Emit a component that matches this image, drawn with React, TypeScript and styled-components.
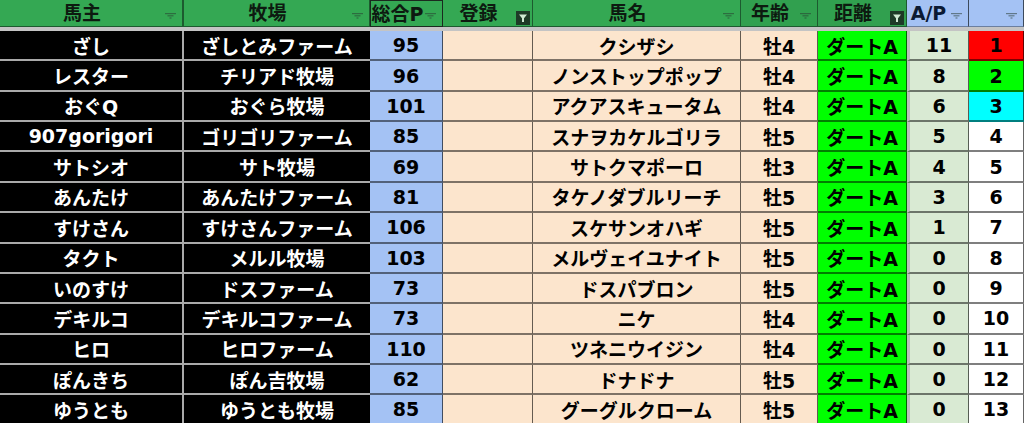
import styled, { createGlobalStyle } from "styled-components";

const GlobalStyle = createGlobalStyle`
  html, body {
    margin: 0;
    padding: 0;
    background: #ffffff;
  }
  body {
    font-family: "DejaVu Sans", "Noto Sans CJK JP", sans-serif;
    overflow: hidden;
  }
`;

const COLUMNS = "184px 186px 73px 90px 208px 77px 89px 62px 55px";

type Tone = "black" | "blue" | "peach" | "dist" | "ap" | "rank";

const rows = [
  ["ざし", "ざしとみファーム", "95", "クシザシ", "牡4", "11", "1"],
  ["レスター", "チリアド牧場", "96", "ノンストップポップ", "牡4", "8", "2"],
  ["おぐQ", "おぐら牧場", "101", "アクアスキュータム", "牡4", "6", "3"],
  ["907gorigori", "ゴリゴリファーム", "85", "スナヲカケルゴリラ", "牡5", "5", "4"],
  ["サトシオ", "サト牧場", "69", "サトクマポーロ", "牡3", "4", "5"],
  ["あんたけ", "あんたけファーム", "81", "タケノダブルリーチ", "牡5", "3", "6"],
  ["すけさん", "すけさんファーム", "106", "スケサンオハギ", "牡5", "1", "7"],
  ["タクト", "メルル牧場", "103", "メルヴェイユナイト", "牡5", "0", "8"],
  ["いのすけ", "ドスファーム", "73", "ドスパブロン", "牡5", "0", "9"],
  ["デキルコ", "デキルコファーム", "73", "ニケ", "牡4", "0", "10"],
  ["ヒロ", "ヒロファーム", "110", "ツネニウイジン", "牡4", "0", "11"],
  ["ぽんきち", "ぽん吉牧場", "62", "ドナドナ", "牡5", "0", "12"],
  ["ゆうとも", "ゆうとも牧場", "85", "グーグルクローム", "牡5", "0", "13"],
];

const rankColors: Record<string, string> = {
  "1": "#ff0000",
  "2": "#00ff00",
  "3": "#00ffff",
};

const toneBg: Record<Tone, string> = {
  black: "#000000",
  blue: "#a4c2f4",
  peach: "#fce5cd",
  dist: "#00ff00",
  ap: "#d9ead3",
  rank: "#ffffff",
};

function FilterMark() {
  return (
    <FilterLines width="11" height="6" viewBox="0 0 11 6">
      <rect x="0" y="0" width="11" height="1.2" />
      <rect x="2.5" y="2.2" width="6" height="1.2" />
      <rect x="4.5" y="4.4" width="2" height="1.2" />
    </FilterLines>
  );
}

function ActiveFilter() {
  return (
    <ActiveBox>
      <svg width="14" height="14" viewBox="0 0 14 14">
        <polygon points="3,3.5 11,3.5 8,7.2 8,11 6,11 6,7.2" fill="#cfe8d2" />
      </svg>
    </ActiveBox>
  );
}

function App() {
  return (
    <>
      <GlobalStyle />
      <Sheet>
        <HeaderRow>
          <HeadCell $bg="#34a853">
            <HeadText>馬主</HeadText>
            <FilterMark />
          </HeadCell>
          <HeadCell $bg="#34a853">
            <HeadText>牧場</HeadText>
            <FilterMark />
          </HeadCell>
          <HeadCell $bg="#34a853" $boxed>
            <HeadText>総合P</HeadText>
            <FilterMark />
          </HeadCell>
          <HeadCell $bg="#34a853">
            <HeadText>登録</HeadText>
            <ActiveFilter />
          </HeadCell>
          <HeadCell $bg="#34a853">
            <HeadText>馬名</HeadText>
            <FilterMark />
          </HeadCell>
          <HeadCell $bg="#31a04f">
            <HeadText>年齢</HeadText>
            <FilterMark />
          </HeadCell>
          <HeadCell $bg="#31a04f">
            <HeadText>距離</HeadText>
            <ActiveFilter />
          </HeadCell>
          <HeadCell $bg="#a4c2f4" $light>
            <HeadText>A/P</HeadText>
            <FilterMark />
          </HeadCell>
          <HeadCell $bg="#a4c2f4" $light>
            <HeadText />
            <FilterMark />
          </HeadCell>
        </HeaderRow>
        <FreezeBar />
        <Body>
          {rows.map(([owner, farm, total, horse, age, ap, rank]) => (
            <Row key={horse}>
              <Cell $tone="black">{owner}</Cell>
              <Cell $tone="black">{farm}</Cell>
              <Cell $tone="blue">{total}</Cell>
              <Cell $tone="peach" />
              <Cell $tone="peach">{horse}</Cell>
              <Cell $tone="peach">{age}</Cell>
              <Cell $tone="dist">ダートA</Cell>
              <Cell $tone="ap">{ap}</Cell>
              <Cell $tone="rank" $fill={rankColors[rank]}>
                {rank}
              </Cell>
            </Row>
          ))}
        </Body>
      </Sheet>
    </>
  );
}

const Sheet = styled.div`
  width: 1024px;
  height: 423px;
  display: flex;
  flex-direction: column;
  overflow: hidden;
`;

const HeaderRow = styled.div`
  display: grid;
  grid-template-columns: ${COLUMNS};
  height: 27px;
  flex-shrink: 0;
`;

const HeadCell = styled.div<{ $bg: string; $boxed?: boolean; $light?: boolean }>`
  position: relative;
  box-sizing: border-box;
  background: ${(p) => p.$bg};
  display: flex;
  align-items: center;
  justify-content: center;
  padding-right: 18px;
  border-right: 1px solid ${(p) => (p.$light ? "#3c4a5c" : "#1d5a2f")};
  border-bottom: 1px solid ${(p) => (p.$light ? "#6b7fa0" : "#1d5a2f")};
  ${(p) => p.$boxed && "border: 1px solid #1b2a1f;"}
  color: ${(p) => (p.$light ? "#0b1a33" : "#0d1a10")};
  font-size: 19px;
  font-weight: 700;
  white-space: nowrap;
  &:first-child {
    border-right-width: 2px;
  }
`;

const HeadText = styled.span`
  line-height: 1;
  padding-top: 1px;
`;

const FilterLines = styled.svg`
  position: absolute;
  right: 6px;
  bottom: 7px;
  fill: rgba(40, 60, 50, 0.55);
`;

const ActiveBox = styled.div`
  position: absolute;
  right: 2px;
  top: 11px;
  width: 14px;
  height: 14px;
  background: #1e3a27;
  display: flex;
`;

const FreezeBar = styled.div`
  height: 4px;
  flex-shrink: 0;
  background: #c4c4c4;
`;

const Body = styled.div`
  display: grid;
  grid-auto-rows: 30.36px;
`;

const Row = styled.div`
  display: grid;
  grid-template-columns: ${COLUMNS};
  min-height: 0;
`;

const Cell = styled.div<{ $tone: Tone; $fill?: string }>`
  box-sizing: border-box;
  display: flex;
  align-items: center;
  justify-content: center;
  background: ${(p) => p.$fill ?? toneBg[p.$tone]};
  color: ${(p) => (p.$tone === "black" ? "#ffffff" : "#000000")};
  font-size: 19px;
  font-weight: 700;
  white-space: nowrap;
  overflow: hidden;
  border-bottom: 2px solid
    ${(p) => (p.$tone === "black" ? "#a9a9a9" : "rgba(0, 0, 0, 0.5)")};
  border-right: 1px solid
    ${(p) => (p.$tone === "black" ? "#a9a9a9" : "rgba(0, 0, 0, 0.6)")};
  ${(p) => p.$tone === "ap" && "border-left: 3px solid #bdbdbd;"}
  &:first-child {
    border-right-width: 2px;
  }
  &:nth-child(2) {
    border-right: none;
  }
`;

export default App;
